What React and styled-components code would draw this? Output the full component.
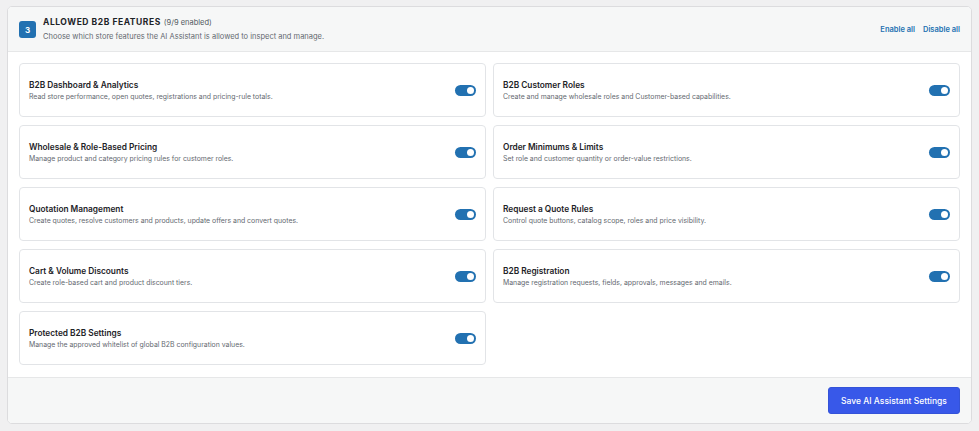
import React, { useState } from 'react'
import styled, { createGlobalStyle } from 'styled-components'

const GlobalStyle = createGlobalStyle`
	html, body {
		margin: 0;
		padding: 0;
		background: #f0f0f1;
		font-family: "Inter", "Noto Sans", sans-serif;
		color: #1d2327;
	}
	* { box-sizing: border-box; }
`

const Panel = styled.div`
	margin: 6px 7px;
	background: #fff;
	border: 1px solid #dcdcde;
	border-radius: 5px;
	overflow: hidden;
`

const Header = styled.div`
	display: flex;
	align-items: center;
	justify-content: space-between;
	height: 45px;
	padding: 0 11px;
	background: #f6f7f7;
	border-bottom: 1px solid #e6e7e8;
`

const HeadLeft = styled.div`
	display: flex;
	align-items: center;
	gap: 7px;
`

const StepBadge = styled.div`
	width: 17px;
	height: 17px;
	border-radius: 3px;
	background: #2271b1;
	color: #fff;
	font-size: 8px;
	font-weight: 700;
	display: flex;
	align-items: center;
	justify-content: center;
	margin-top: 1px;
`

const HeadText = styled.div`
	display: flex;
	flex-direction: column;
	gap: 2px;
`

const Heading = styled.h2`
	margin: 0;
	font-size: 8.5px;
	line-height: 12px;
	font-weight: 700;
	letter-spacing: 0.55px;
	text-transform: uppercase;
	color: #1d2327;
`

const Count = styled.span`
	font-size: 7.5px;
	font-weight: 400;
	letter-spacing: 0;
	text-transform: none;
	color: #50575e;
	margin-left: 3px;
`

const SubTitle = styled.p`
	margin: 0;
	font-size: 7.5px;
	line-height: 11px;
	color: #646970;
`

const Actions = styled.div`
	display: flex;
	gap: 8px;
`

const LinkButton = styled.button`
	border: 0;
	background: none;
	padding: 0;
	font-family: inherit;
	font-size: 7.5px;
	font-weight: 600;
	color: #2271b1;
	cursor: pointer;
`

const Body = styled.div`
	display: grid;
	grid-template-columns: 1fr 1fr;
	column-gap: 7px;
	row-gap: 8px;
	padding: 11px 11px 12px;
`

const Card = styled.div`
	display: flex;
	align-items: center;
	justify-content: space-between;
	height: 54px;
	padding: 0 9px;
	border: 1px solid #e2e4e7;
	border-radius: 4px;
	background: #fff;
`

const CardText = styled.div`
	display: flex;
	flex-direction: column;
	gap: 1px;
`

const CardTitle = styled.h3`
	margin: 0;
	font-size: 8.3px;
	line-height: 12px;
	font-weight: 600;
	color: #1d2327;
`

const CardDesc = styled.p`
	margin: 0;
	font-size: 6.9px;
	line-height: 10px;
	color: #646970;
`

const Toggle = styled.button`
	position: relative;
	width: 21px;
	height: 11px;
	padding: 0;
	border: 0;
	border-radius: 6px;
	background: ${p => (p.$on ? '#2271b1' : '#c3c4c7')};
	cursor: pointer;
	flex-shrink: 0;

	&::after {
		content: '';
		position: absolute;
		top: 2px;
		left: ${p => (p.$on ? '12px' : '2px')};
		width: 7px;
		height: 7px;
		border-radius: 50%;
		background: #fff;
	}
`

const Footer = styled.div`
	display: flex;
	justify-content: flex-end;
	padding: 9px 11px;
	background: #f6f7f7;
	border-top: 1px solid #e6e7e8;
`

const SaveButton = styled.button`
	width: 132px;
	height: 27px;
	border: 1px solid #3453d8;
	border-radius: 3px;
	background: #3858e9;
	color: #fff;
	font-family: inherit;
	font-size: 8.5px;
	font-weight: 500;
	cursor: pointer;
`

const features = [
	{ title: 'B2B Dashboard & Analytics', desc: 'Read store performance, open quotes, registrations and pricing-rule totals.' },
	{ title: 'B2B Customer Roles', desc: 'Create and manage wholesale roles and Customer-based capabilities.' },
	{ title: 'Wholesale & Role-Based Pricing', desc: 'Manage product and category pricing rules for customer roles.' },
	{ title: 'Order Minimums & Limits', desc: 'Set role and customer quantity or order-value restrictions.' },
	{ title: 'Quotation Management', desc: 'Create quotes, resolve customers and products, update offers and convert quotes.' },
	{ title: 'Request a Quote Rules', desc: 'Control quote buttons, catalog scope, roles and price visibility.' },
	{ title: 'Cart & Volume Discounts', desc: 'Create role-based cart and product discount tiers.' },
	{ title: 'B2B Registration', desc: 'Manage registration requests, fields, approvals, messages and emails.' },
	{ title: 'Protected B2B Settings', desc: 'Manage the approved whitelist of global B2B configuration values.' },
]

export default function App() {
	const [enabled, setEnabled] = useState(features.map(() => true))
	const count = enabled.filter(Boolean).length

	const flip = i => setEnabled(enabled.map((v, j) => (j === i ? !v : v)))

	return (
		<>
			<GlobalStyle />
			<Panel>
				<Header>
					<HeadLeft>
						<StepBadge>3</StepBadge>
						<HeadText>
							<Heading>
								Allowed B2B Features<Count>({count}/{features.length} enabled)</Count>
							</Heading>
							<SubTitle>Choose which store features the AI Assistant is allowed to inspect and manage.</SubTitle>
						</HeadText>
					</HeadLeft>
					<Actions>
						<LinkButton onClick={() => setEnabled(features.map(() => true))}>Enable all</LinkButton>
						<LinkButton onClick={() => setEnabled(features.map(() => false))}>Disable all</LinkButton>
					</Actions>
				</Header>
				<Body>
					{features.map((f, i) => (
						<Card key={i}>
							<CardText>
								<CardTitle>{f.title}</CardTitle>
								<CardDesc>{f.desc}</CardDesc>
							</CardText>
							<Toggle $on={enabled[i]} onClick={() => flip(i)} aria-label={f.title} />
						</Card>
					))}
				</Body>
				<Footer>
					<SaveButton>Save AI Assistant Settings</SaveButton>
				</Footer>
			</Panel>
		</>
	)
}
